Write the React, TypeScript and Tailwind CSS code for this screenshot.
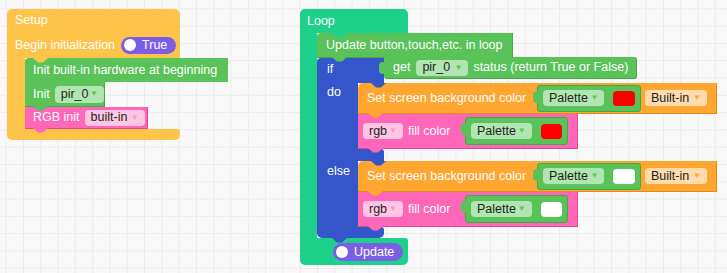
import React from 'react'

const FONT = "font-['Liberation_Sans',Arial,sans-serif]"

// block palette
const SETUP = '#fec44a'
const GREEN = '#59c259'
const PINK = '#fe66b8'
const TEAL = '#1dd18b'
const BLUE = '#3556cb'
const ORANGE = '#ffa631'

// little connection tab that hangs under a statement block
function Tab({ fill, className }: { fill: string; className: string }) {
  return (
    <svg width="15" height="5" viewBox="0 0 15 5" className={`absolute z-10 ${className}`}>
      <path d="M0 0 L5 4.5 L10 4.5 L15 0 Z" fill={fill} />
    </svg>
  )
}

// puzzle plug on the left of a value block
function Plug({ fill }: { fill: string }) {
  return (
    <svg width="6" height="12" viewBox="0 0 6 12" className="absolute -left-[5px] top-[5px]">
      <path d="M6 0 C1 0 0 1.5 0 3.5 L0 8.5 C0 10.5 1 12 6 12 Z" fill={fill} />
    </svg>
  )
}

function Dropdown({ label, className, arrow }: { label: string; className: string; arrow: string }) {
  return (
    <div className={`flex items-center justify-between h-[16px] rounded-[4px] pl-[6px] pr-[6px] text-[#1e1e1e] ${className}`}>
      <span>{label}</span>
      <span className={`text-[8px] ${arrow}`}>▼</span>
    </div>
  )
}

function Toggle({ label, className }: { label: string; className: string }) {
  return (
    <div className={`flex items-center rounded-full bg-[#7b5de6] pl-[3px] gap-[6px] ${className}`}>
      <span className="w-[12px] h-[12px] rounded-full bg-white" />
      <span>{label}</span>
    </div>
  )
}

function Swatch({ white }: { white?: boolean }) {
  return <div className={`w-[22px] h-[15px] rounded-[4px] ${white ? 'bg-white' : 'bg-[#ff0000]'}`} />
}

function PaletteValue({ white, className }: { white?: boolean; className: string }) {
  return (
    <div className={`relative flex items-center gap-[9px] px-[5px] rounded-[3px] bg-[#59c259] border border-[#43a843] ${className}`}>
      <Plug fill={GREEN} />
      <Dropdown label="Palette" className="w-[62px] bg-[#b1e5b1]" arrow="text-[#5cc55c]" />
      <Swatch white={white} />
    </div>
  )
}

function SetColorRow({ white }: { white?: boolean }) {
  return (
    <div className="relative w-[359px] h-[31px] rounded-tl-[5px] bg-[#ffa631] border-b border-r border-[#e08d1f] flex items-center pl-[9px]">
      <span className="w-[170px]">Set screen background color</span>
      <PaletteValue white={white} className="h-[27px] w-[104px]" />
      <Dropdown label="Built-in" className="ml-[4px] w-[62px] bg-[#ffdbae]" arrow="text-[#ffa631]" />
      <Tab fill={ORANGE} className="left-[10px] top-full" />
    </div>
  )
}

function FillRow({ white }: { white?: boolean }) {
  return (
    <div className="relative w-[220px] h-[35px] bg-[#fe66b8] border-b border-r border-[#e0479a] flex items-center pl-[5px]">
      <Dropdown label="rgb" className="w-[40px] bg-[#ffc6e4]" arrow="text-[#ff93cd]" />
      <span className="ml-[5px] w-[57px]">fill color</span>
      <PaletteValue white={white} className="h-[28px] w-[103px]" />
      <Tab fill={PINK} className="left-[10px] top-full" />
    </div>
  )
}

function SetupBlock() {
  return (
    <div className="absolute left-[7px] top-[9px] flex flex-col">
      <div className="relative w-[173px] h-[49px] rounded-t-[5px] bg-[#fec44a] pl-[8px] flex flex-col">
        <div className="h-[22px] flex items-center">Setup</div>
        <div className="mt-[3px] h-[22px] flex items-center gap-[6px]">
          <span>Begin initialization</span>
          <Toggle label="True" className="w-[55px] h-[17px]" />
        </div>
        <Tab fill={SETUP} className="left-[26px] top-full" />
      </div>
      <div className="flex">
        <div className="w-[18px] bg-[#fec44a]" />
        <div className="flex flex-col">
          <div className="relative w-[203px] h-[24px] rounded-tl-[4px] bg-[#59c259] flex items-center pl-[8px]">
            Init built-in hardware at beginning
            <Tab fill={GREEN} className="left-[8px] top-full" />
          </div>
          <div className="relative w-[80px] h-[25px] bg-[#59c259] border-b border-r border-[#47a847] flex items-center pl-[8px] gap-[5px]">
            <span>Init</span>
            <Dropdown label="pir_0" className="w-[50px] h-[17px] bg-[#b1e5b1]" arrow="text-[#5cc55c]" />
            <Tab fill={GREEN} className="left-[8px] top-full" />
          </div>
          <div className="relative w-[123px] h-[22px] bg-[#fe66b8] border-b border-r border-[#e0479a] flex items-center pl-[8px] gap-[5px]">
            <span>RGB init</span>
            <Dropdown label="built-in" className="w-[60px] bg-[#ffc6e4]" arrow="text-[#ff93cd]" />
            <Tab fill={PINK} className="left-[8px] top-full" />
          </div>
        </div>
      </div>
      <div className="w-[173px] h-[11px] rounded-b-[5px] rounded-tr-[3px] bg-[#fec44a]" />
    </div>
  )
}

function IfElseBlock() {
  return (
    <div className="flex flex-col">
      <div className="flex items-start">
        <div className="relative w-[67px] h-[25px] rounded-tl-[4px] bg-[#3556cb] pl-[10px] pt-[5px]">
          if
          <Tab fill={BLUE} className="left-[54px] top-full" />
        </div>
        <div className="relative -mt-[1px] w-[253px] h-[22px] rounded-[3px] bg-[#59c259] border-b border-r border-[#47a847] flex items-center pl-[9px]">
          <Plug fill={GREEN} />
          <span>get</span>
          <Dropdown label="pir_0" className="ml-[6px] w-[52px] bg-[#b1e5b1]" arrow="text-[#5cc55c]" />
          <span className="ml-[5px]">status (return True or False)</span>
        </div>
      </div>
      <div className="flex">
        <div className="w-[41px] bg-[#3556cb] pl-[10px] pt-[3px]">do</div>
        <div className="flex flex-col">
          <SetColorRow />
          <FillRow />
        </div>
      </div>
      <div className="relative w-[67px] h-[12px] rounded-tr-[3px] bg-[#3556cb]">
        <Tab fill={BLUE} className="left-[54px] top-full" />
      </div>
      <div className="flex">
        <div className="w-[41px] bg-[#3556cb] pl-[10px] pt-[4px]">else</div>
        <div className="flex flex-col">
          <SetColorRow white />
          <FillRow white />
        </div>
      </div>
      <div className="relative w-[67px] h-[11px] rounded-b-[5px] rounded-tr-[3px] bg-[#3556cb]">
        <Tab fill={BLUE} className="left-[15px] top-full" />
      </div>
    </div>
  )
}

function LoopBlock() {
  return (
    <div className="absolute left-[300px] top-[9px] flex flex-col">
      <div className="relative w-[108px] h-[24px] rounded-t-[5px] bg-[#1dd18b] pl-[7px] flex items-center">
        Loop
        <Tab fill={TEAL} className="left-[32px] top-full" />
      </div>
      <div className="flex">
        <div className="w-[17px] bg-[#1dd18b]" />
        <div className="flex flex-col">
          <div className="relative w-[196px] h-[25px] rounded-tl-[4px] bg-[#59c259] border-b border-r border-[#47a847] flex items-center pl-[9px]">
            Update button,touch,etc. in loop
            <Tab fill={GREEN} className="left-[15px] top-full" />
          </div>
          <IfElseBlock />
        </div>
      </div>
      <div className="w-[108px] h-[27px] rounded-b-[5px] rounded-tr-[3px] bg-[#1dd18b] flex items-center pl-[33px] pt-[1px]">
        <Toggle label="Update" className="w-[70px] h-[18px]" />
      </div>
    </div>
  )
}

export default function App() {
  return (
    <div
      className={`relative w-[727px] h-[273px] overflow-hidden bg-[#f9f9f9] bg-[linear-gradient(to_right,#ebebeb_1px,transparent_1px),linear-gradient(to_bottom,#ebebeb_1px,transparent_1px)] bg-size-[17.3px_17.3px] bg-position-[5.7px_8.3px] text-[12.5px] leading-none text-white ${FONT}`}
    >
      <SetupBlock />
      <LoopBlock />
    </div>
  )
}
